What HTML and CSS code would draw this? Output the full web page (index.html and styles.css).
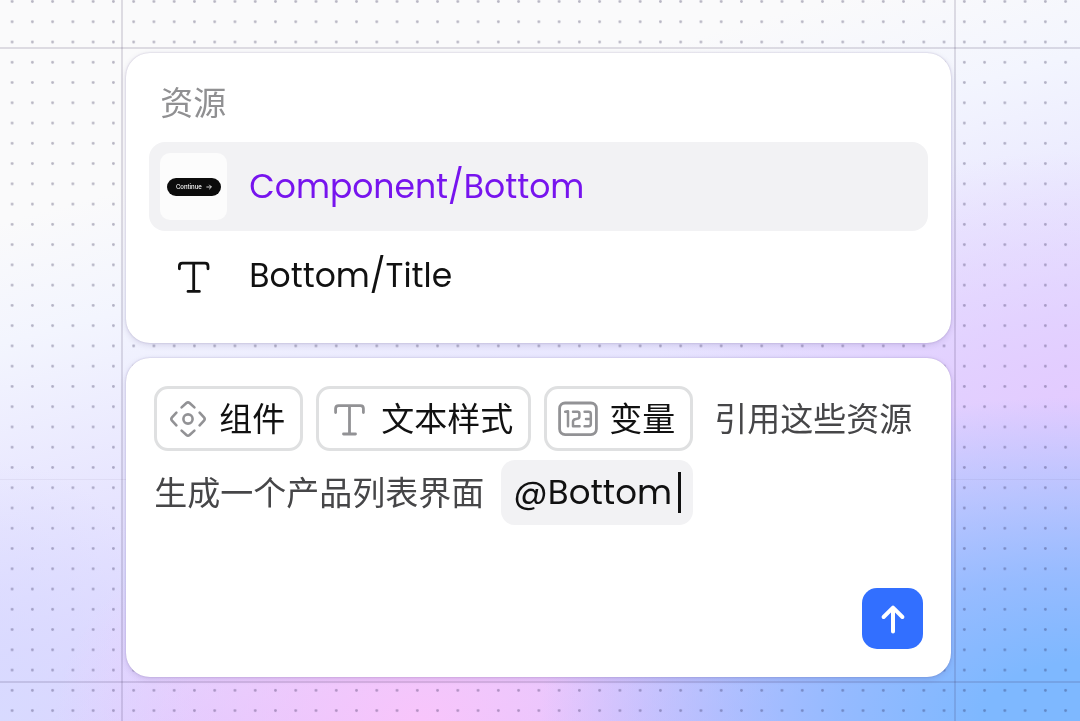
FILE: index.html
```
<!DOCTYPE html>
<html lang="zh-CN">
<head>
    <meta charset="UTF-8">
    <meta name="viewport" content="width=device-width, initial-scale=1.0">
    <title>引用资源</title>
    <link rel="stylesheet" href="styles.css">
</head>
<body>
    <svg class="dots" aria-hidden="true">
        <defs>
            <pattern id="dot" x="2" y="-8.6" width="20.26" height="20.26" patternUnits="userSpaceOnUse">
                <circle cx="10.1" cy="10.1" r="1.4" fill="#1c1440" fill-opacity="0.3"/>
            </pattern>
        </defs>
        <rect width="100%" height="100%" fill="url(#dot)"/>
    </svg>
    <main class="frame">
        <section class="card resources">
            <h2 class="title">资源</h2>
            <ul class="list">
                <li>
                    <button type="button" class="item active">
                        <span class="thumb">
                            <span class="pill">
                                Continue
                                <svg width="6" height="6" viewBox="0 0 6 6" fill="none" stroke="currentColor" stroke-width="0.8"><path d="M0.4 3h5M3.2 0.8L5.4 3L3.2 5.2"/></svg>
                            </span>
                        </span>
                        <span>Component/Bottom</span>
                    </button>
                </li>
                <li>
                    <button type="button" class="item">
                        <span class="thumb plain">
                            <svg width="34" height="34" viewBox="0 0 34 34" fill="none" stroke="currentColor" stroke-width="2.8" stroke-linecap="round" stroke-linejoin="round"><path d="M2.4 9.8V7.2Q2.4 4.2 5.4 4.2H28Q31 4.2 31 7.2V9.8M16.7 4.2V32.4M11 32.4H22.4"/></svg>
                        </span>
                        <span>Bottom/Title</span>
                    </button>
                </li>
            </ul>
        </section>

        <section class="card prompt">
            <div class="line">
                <button type="button" class="tag">
                    <svg width="40" height="40" viewBox="0 0 40 40" fill="none" stroke="currentColor" stroke-width="2.6" stroke-linecap="round" stroke-linejoin="round"><circle cx="20" cy="20" r="4.6"/><path d="M13.6 8.4L18.4 4Q20 2.6 21.6 4L26.4 8.4M13.6 31.6L18.4 36Q20 37.4 21.6 36L26.4 31.6M8.4 13.6L4 18.4Q2.6 20 4 21.6L8.4 26.4M31.6 13.6L36 18.4Q37.4 20 36 21.6L31.6 26.4"/></svg>
                    组件
                </button>
                <button type="button" class="tag">
                    <svg width="40" height="40" viewBox="0 0 40 40" fill="none" stroke="currentColor" stroke-width="2.8" stroke-linecap="round" stroke-linejoin="round"><path d="M5.6 13.6V9.6Q5.6 6.6 8.6 6.6H30.4Q33.4 6.6 33.4 9.6V13.6M19.5 6.6V35M13.5 35H25.5"/></svg>
                    文本样式
                </button>
                <button type="button" class="tag">
                    <svg width="40" height="40" viewBox="0 0 40 40" fill="none" stroke="currentColor" stroke-linecap="round" stroke-linejoin="round"><rect x="1.6" y="4" width="36.8" height="31.6" rx="5.5" stroke-width="2.8"/><path stroke-width="2.5" d="M7.2 12.8L10 12.2V27.2M15 12.8H19.4Q21.4 12.8 21.4 14.8V17.4Q21.4 19.2 19.6 19.6L17 20.2Q15 20.8 15 22.8V27.2H21.6M26.6 12.8H30.6Q32.8 12.8 32.8 15V25Q32.8 27.2 30.6 27.2H26.6M28 20H32.8"/></svg>
                    变量
                </button>
                <span class="text">引用这些资源</span>
            </div>
            <div class="line">
                <span class="text">生成一个产品列表界面</span>
                <label class="mention">
                    <input type="text" value="@Bottom" aria-label="引用资源" size="7">
                    <span class="caret"></span>
                </label>
            </div>
            <button type="button" class="send" aria-label="发送">
                <svg width="34" height="34" viewBox="0 0 34 34" fill="none" stroke="currentColor" stroke-width="4" stroke-linecap="round" stroke-linejoin="round"><path d="M17 29.6V5.8M7.6 15L17 5.6L26.4 15"/></svg>
            </button>
        </section>
    </main>
</body>
</html>
```
FILE: styles.css
```
* {
    box-sizing: border-box;
}
body {
    margin: 0;
    min-height: 100vh;
    padding: 47px 0 38px;
    font-family: Poppins, Inter, "Noto Sans CJK SC", sans-serif;
    font-size: 33px;
    color: #111;
    background-color: #e3dcfb;
    background-image:
        radial-gradient(ellipse 50% 45% at 100% 100%, #7eb8ff 18%, rgba(134, 184, 255, 0.8) 45%, rgba(160, 184, 255, 0) 100%),
        radial-gradient(ellipse 34% 34% at 39% 100%, #f8c5fb 0%, rgba(248, 197, 251, 0) 100%),
        radial-gradient(ellipse 18% 36% at 0% 100%, #d8daff 0%, rgba(216, 218, 255, 0) 100%),
        radial-gradient(ellipse 40% 35% at 100% 56%, #e3cbff 0%, rgba(227, 203, 255, 0) 100%),
        linear-gradient(165deg, #fafafb 22%, #f3f5fe 34%, #e2deff 60%, #d4c4ff 90%);
}
/* vertical guide lines */
body::before {
    content: "";
    position: fixed;
    top: 0;
    bottom: 0;
    left: 11.2%;
    right: 11.5%;
    border: solid rgba(60, 50, 90, 0.15);
    border-width: 0 2px;
}
button {
    font: inherit;
    color: inherit;
    border: 0;
    background: none;
    cursor: pointer;
}
svg {
    flex: none;
}
.dots {
    position: fixed;
    inset: 0;
    width: 100%;
    height: 100%;
}
.frame {
    position: relative;
    display: flex;
    flex-direction: column;
    gap: 15px;
    padding: 4px 11.9% 4px 11.7%;
    border: solid rgba(60, 50, 90, 0.15);
    border-width: 2px 0;
}
.frame::before {
    content: "";
    position: absolute;
    top: 68%;
    left: 0;
    right: 0;
    height: 1px;
    background: rgba(60, 50, 90, 0.06);
}
.card {
    position: relative;
    background: #fff;
    border-radius: 24px;
    box-shadow: 0 0 2px rgba(60, 40, 110, 0.25), 0 2px 6px rgba(60, 40, 110, 0.15);
}
.resources {
    padding: 25px 23px 23px;
}
.title {
    margin: 0 0 12px;
    padding-left: 11px;
    font-size: 33px;
    line-height: 52px;
    font-weight: 400;
    color: #909092;
}
.list {
    margin: 0;
    padding: 0;
    list-style: none;
}
.item {
    display: flex;
    align-items: center;
    gap: 22px;
    width: 100%;
    padding: 11px;
    border-radius: 16px;
    text-align: left;
}
.item.active {
    color: #7714ee;
    background: #f2f2f4;
}
.thumb {
    display: flex;
    align-items: center;
    justify-content: center;
    width: 67px;
    height: 67px;
    border-radius: 10px;
    background: #fcfcfc;
}
.thumb.plain {
    background: none;
}
.pill {
    display: flex;
    align-items: center;
    justify-content: center;
    gap: 4px;
    width: 54px;
    height: 18px;
    border-radius: 9px;
    font-family: Inter, sans-serif;
    font-size: 6px;
    font-weight: 500;
    color: #fff;
    background: #0c0c0c;
}
.prompt {
    display: flex;
    flex-direction: column;
    gap: 9px;
    padding: 28px;
}
.line {
    display: flex;
    align-items: center;
    gap: 13px;
}
.tag {
    display: flex;
    align-items: center;
    gap: 11px;
    height: 65px;
    padding: 0 15px 0 11px;
    border: 3px solid #dfe0e1;
    border-radius: 14px;
    white-space: nowrap;
}
.tag svg {
    color: #929295;
}
.text {
    color: #464648;
    white-space: nowrap;
}
.tag + .text {
    padding-left: 8px;
}
.mention {
    display: flex;
    align-items: center;
    height: 65px;
    margin-left: 4px;
    padding: 0 12px;
    border-radius: 14px;
    background: #f2f2f4;
}
.mention input {
    width: 165px;
    padding: 0;
    border: 0;
    outline: 0;
    font: inherit;
    font-size: 34px;
    color: inherit;
    background: none;
}
.caret {
    width: 3px;
    height: 41px;
    background: #111;
}
.send {
    display: flex;
    align-items: center;
    justify-content: center;
    align-self: flex-end;
    width: 61px;
    height: 61px;
    margin-top: 54px;
    padding: 0;
    border-radius: 15px;
    color: #fff;
    background: #326fff;
}
```
